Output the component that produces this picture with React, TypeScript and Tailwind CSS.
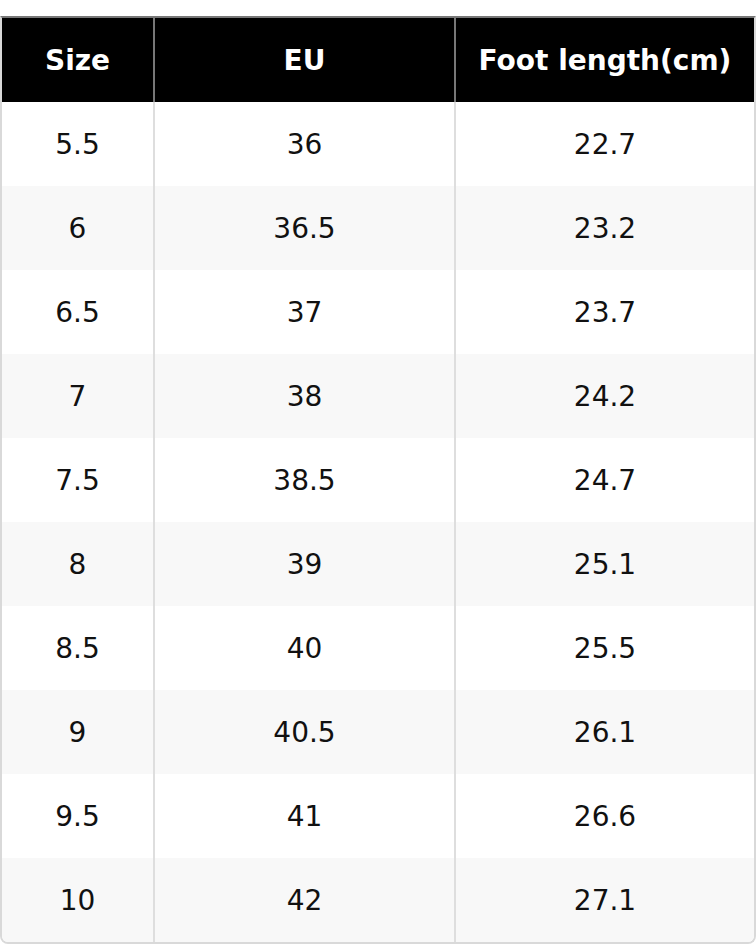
import React from "react";

const rows: [string, string, string][] = [
  ["5.5", "36", "22.7"],
  ["6", "36.5", "23.2"],
  ["6.5", "37", "23.7"],
  ["7", "38", "24.2"],
  ["7.5", "38.5", "24.7"],
  ["8", "39", "25.1"],
  ["8.5", "40", "25.5"],
  ["9", "40.5", "26.1"],
  ["9.5", "41", "26.6"],
  ["10", "42", "27.1"],
];

export default function App() {
  return (
    <div className="w-[756px] h-[944px] bg-white pt-[16px]" style={{ fontFamily: '"DejaVu Sans", sans-serif' }}>
      <div className="border-2 border-[#d9d9d9] border-t-[#777] rounded-b-[8px] overflow-hidden">
        <div className="grid grid-cols-[153px_301px_1fr] h-[84px] bg-black text-white font-bold text-[28px]">
          <div className="flex items-center justify-center pt-[2px] border-r-2 border-[#777]">Size</div>
          <div className="flex items-center justify-center pt-[2px] border-r-2 border-[#777]">EU</div>
          <div className="flex items-center justify-center pt-[2px]">Foot length(cm)</div>
        </div>
        {rows.map((r, i) => (
          <div
            key={i}
            className={`grid grid-cols-[153px_301px_1fr] h-[84px] text-[28px] text-[#111] ${i % 2 === 1 ? "bg-[#f8f8f8]" : "bg-white"}`}
          >
            <div className="flex items-center justify-center pt-[2px] border-r-2 border-[#dedede]">{r[0]}</div>
            <div className="flex items-center justify-center pt-[2px] border-r-2 border-[#dedede]">{r[1]}</div>
            <div className="flex items-center justify-center pt-[2px]">{r[2]}</div>
          </div>
        ))}
      </div>
    </div>
  );
}
